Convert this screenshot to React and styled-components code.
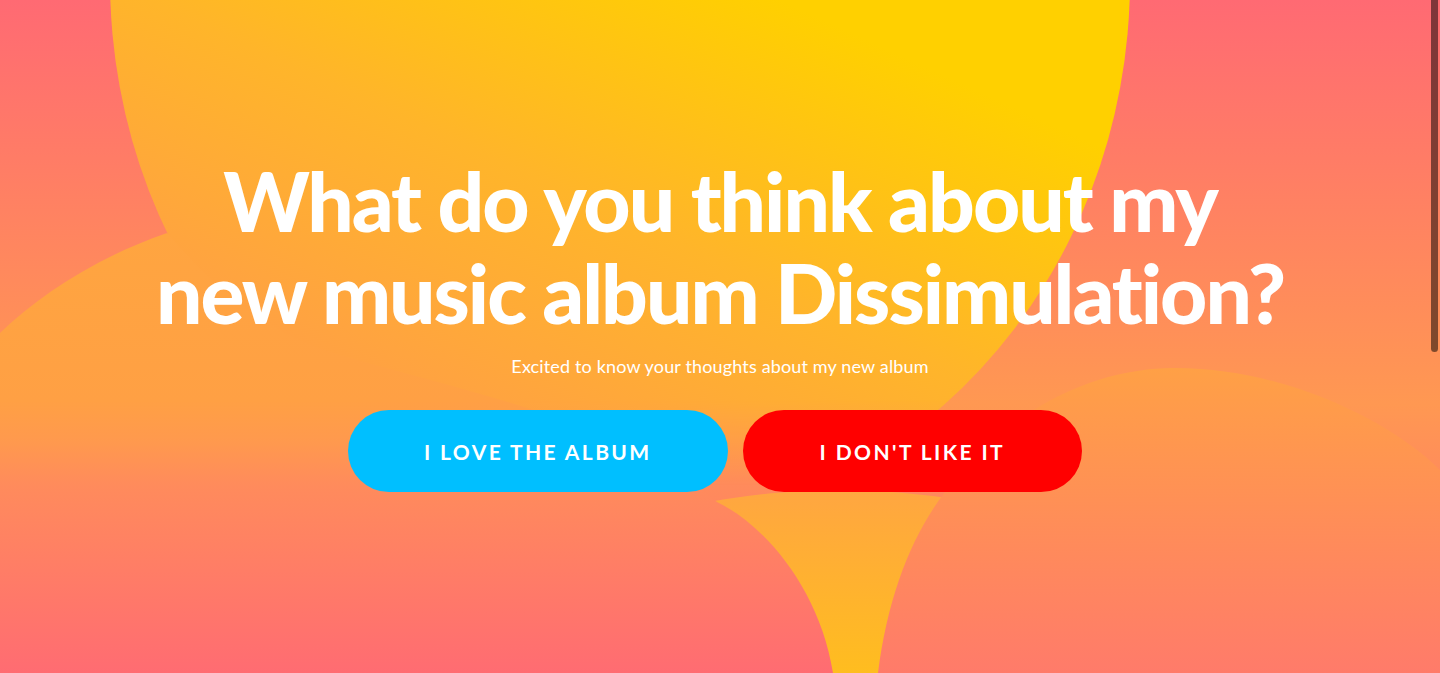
import React from "react";
import styled, { createGlobalStyle } from "styled-components";

const GlobalStyle = createGlobalStyle`
  html, body {
    margin: 0;
    padding: 0;
    height: 100%;
    overflow: hidden;
  }
  body {
    font-family: "Lato", "Liberation Sans", sans-serif;
    -webkit-font-smoothing: antialiased;
  }
  * {
    box-sizing: border-box;
  }
`;

const Page = styled.main`
  position: relative;
  width: 100%;
  height: 673px;
  overflow: hidden;
  background: #ff9852;
`;

const Backdrop = styled.svg`
  position: absolute;
  inset: 0;
  width: 100%;
  height: 100%;
  z-index: 0;
`;

const Content = styled.section`
  position: relative;
  z-index: 1;
  display: flex;
  flex-direction: column;
  align-items: center;
  padding-top: 154px;
  color: #ffffff;
`;

const Title = styled.h1`
  margin: 0;
  font-size: 82px;
  line-height: 92px;
  font-weight: 900;
  letter-spacing: -2px;
  text-align: center;
`;

const Subtitle = styled.p`
  margin: 16px 0 0;
  font-size: 18px;
  line-height: 24px;
  font-weight: 400;
  letter-spacing: 0.15px;
  text-align: center;
`;

const ButtonRow = styled.div`
  display: flex;
  gap: 15px;
  margin-top: 32px;
  padding-right: 10px;
`;

const PillButton = styled.button`
  height: 82px;
  padding: 0 ${(p) => p.$pad}px;
  border: none;
  border-radius: 41px;
  background: ${(p) => p.$bg};
  color: #ffffff;
  font-family: "Lato", "Liberation Sans", sans-serif;
  font-size: 21px;
  font-weight: 700;
  letter-spacing: 2.4px;
  text-transform: uppercase;
  cursor: pointer;
`;

const ScrollThumb = styled.div`
  position: absolute;
  top: 0;
  right: 2px;
  width: 7px;
  height: 352px;
  border-radius: 0 0 4px 4px;
  background: rgba(0, 0, 0, 0.5);
  z-index: 2;
`;

// decorative shapes behind the text
const Blobs = () => (
  <Backdrop viewBox="0 0 1440 673" preserveAspectRatio="none">
    <defs>
      <linearGradient id="bgFill" gradientUnits="userSpaceOnUse" x1="0" y1="0" x2="0" y2="673">
        <stop offset="0" stopColor="#ff6a73" />
        <stop offset="0.6" stopColor="#ff9852" />
        <stop offset="1" stopColor="#ff6c72" />
      </linearGradient>
      <linearGradient id="stemFill" gradientUnits="userSpaceOnUse" x1="0" y1="490" x2="0" y2="673">
        <stop offset="0" stopColor="#ffa641" />
        <stop offset="1" stopColor="#ffbd1f" />
      </linearGradient>
      <linearGradient id="leftFill" gradientUnits="userSpaceOnUse" x1="0" y1="233" x2="0" y2="673">
        <stop offset="0" stopColor="#ffa540" />
        <stop offset="0.38" stopColor="#ffa044" />
        <stop offset="0.475" stopColor="#ff994e" />
        <stop offset="0.573" stopColor="#ff8b5c" />
        <stop offset="1" stopColor="#ff6c72" />
      </linearGradient>
      <linearGradient id="rightFill" gradientUnits="userSpaceOnUse" x1="0" y1="368" x2="0" y2="673">
        <stop offset="0" stopColor="#ffa046" />
        <stop offset="1" stopColor="#ff7b6a" />
      </linearGradient>
      <linearGradient id="sunFill" gradientUnits="userSpaceOnUse" x1="780" y1="0" x2="560" y2="480">
        <stop offset="0" stopColor="#ffd000" />
        <stop offset="0.5" stopColor="#ffb52a" />
        <stop offset="1" stopColor="#ffa044" />
      </linearGradient>
      <linearGradient id="fadeGrad" gradientUnits="userSpaceOnUse" x1="0" y1="400" x2="0" y2="485">
        <stop offset="0" stopColor="#fff" />
        <stop offset="1" stopColor="#000" />
      </linearGradient>
      <mask id="sunFade" maskUnits="userSpaceOnUse" x="0" y="0" width="1440" height="673">
        <rect width="1440" height="673" fill="url(#fadeGrad)" />
      </mask>
    </defs>
    <rect width="1440" height="673" fill="url(#bgFill)" />
    <ellipse cx="840" cy="990" rx="600" ry="500" fill="url(#stemFill)" />
    <path
      d="M878,673 C888,595 912,535 945,492 C1000,420 1080,370 1170,368 C1280,366 1390,420 1440,470 L1440,673 Z"
      fill="url(#rightFill)"
    />
    <ellipse cx="620" cy="-20" rx="510" ry="550" fill="url(#sunFill)" mask="url(#sunFade)" />
    <path
      d="M0,333 C40,295 95,258 167,233 C200,270 255,330 340,355 C450,388 620,420 717,502 C765,525 820,590 833,673 L0,673 Z"
      fill="url(#leftFill)"
    />
  </Backdrop>
);

export default function App() {
  return (
    <>
      <GlobalStyle />
      <Page>
        <Blobs />
        <Content>
          <Title>
            What do you think about my
            <br />
            new music album Dissimulation?
          </Title>
          <Subtitle>Excited to know your thoughts about my new album</Subtitle>
          <ButtonRow>
            <PillButton $bg="#00bfff" $pad={76}>I love the album</PillButton>
            <PillButton $bg="#ff0000" $pad={77}>I don't like it</PillButton>
          </ButtonRow>
        </Content>
        <ScrollThumb />
      </Page>
    </>
  );
}
